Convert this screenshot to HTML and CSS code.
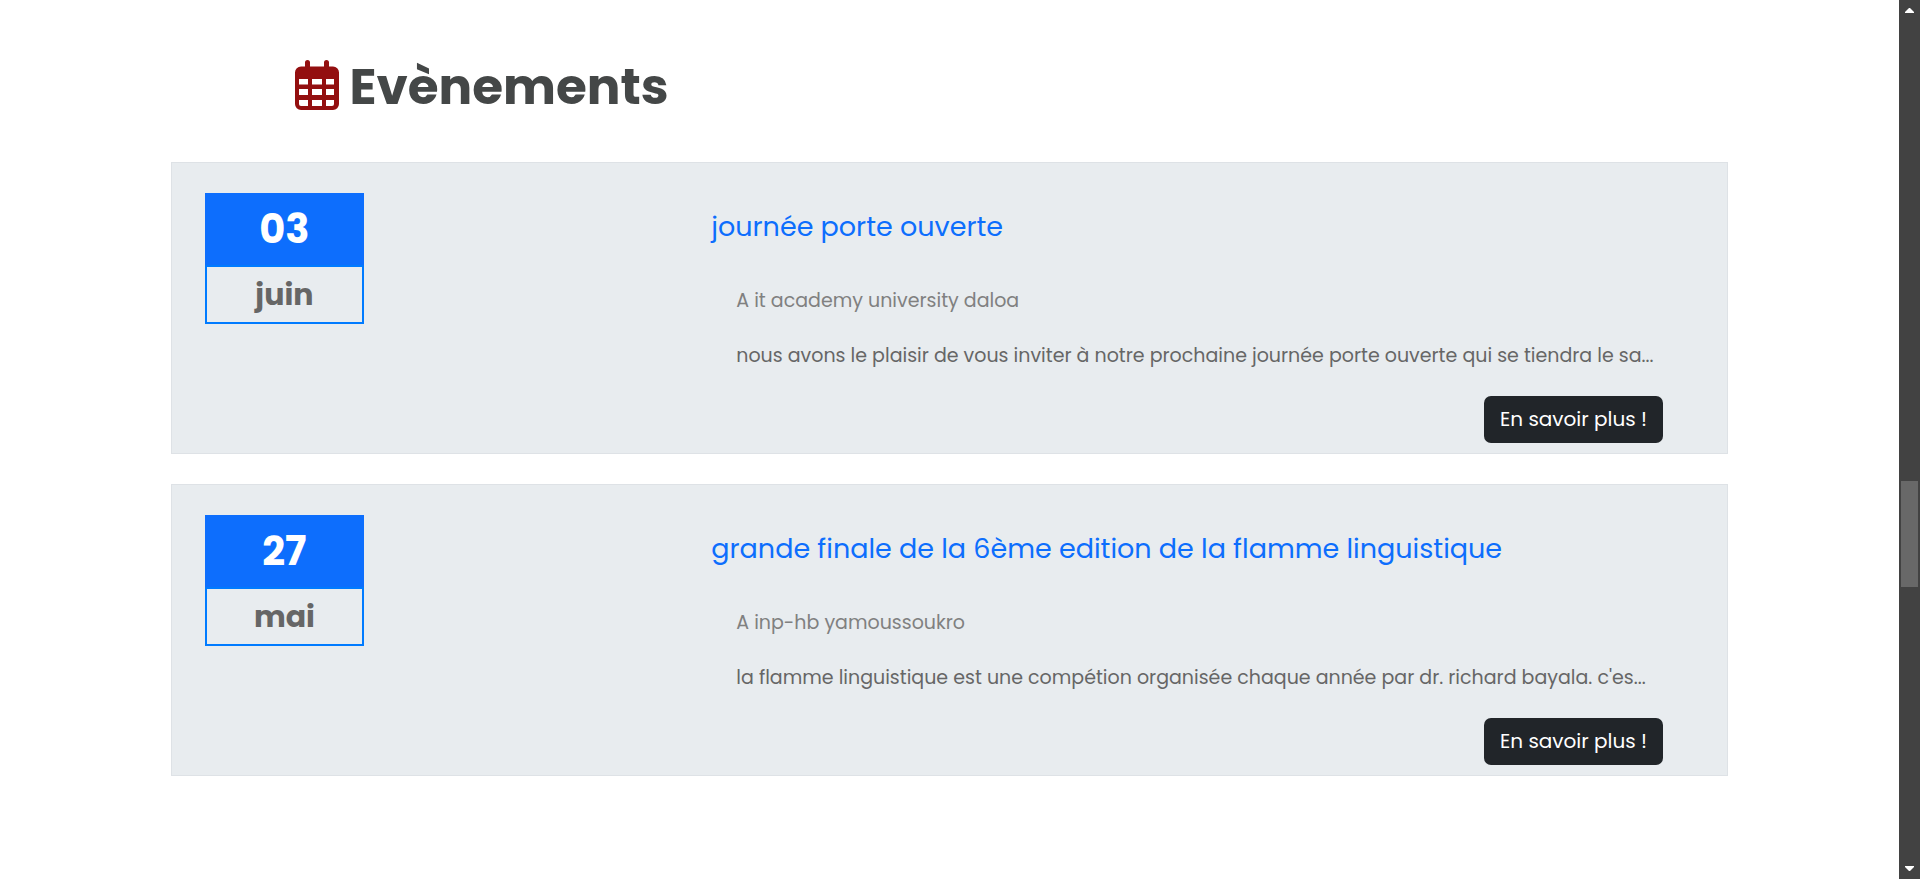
FILE: index.html
```html
<!DOCTYPE html>
<html lang="fr">
<head>
    <meta charset="utf-8" />
    <title>Evènements</title>
    <link rel="stylesheet" href="styles.css">
</head>
<body>
    <main>
        <section class="events">
            <h1 class="events-title">
                <svg class="calendar-icon" viewBox="0 0 44 50" aria-hidden="true">
                    <path fill="currentColor" fill-rule="evenodd" d="M10 2.500a2.500 2.500 0 0 1 5 0V6.500H29V2.500a2.500 2.500 0 0 1 5 0V6.500H38a6 6 0 0 1 6 6V44a6 6 0 0 1-6 6H6a6 6 0 0 1-6-6V12.500a6 6 0 0 1 6-6h4zM4 19v5.500h9V19zM17 19v5.500h10V19zM31 19v5.500h8V19zM4 29v6h9v-6zM17 29v6h10v-6zM31 29v6h8v-6zM4 40v4q0 2 2 2h7v-6zM17 40v6h10v-6zM31 40v6h6q2 0 2-2v-4z" />
                </svg>
                <span>Evènements</span>
            </h1>

            <article class="event">
                <div class="event-date">
                    <div class="day">03</div>
                    <div class="month">juin</div>
                </div>
                <div class="event-body">
                    <h2><a href="#">journée porte ouverte</a></h2>
                    <p class="place">A it academy university daloa</p>
                    <p class="text">nous avons le plaisir de vous inviter à notre prochaine journée porte ouverte qui se tiendra le sa...</p>
                    <a class="btn" href="#">En savoir plus !</a>
                </div>
            </article>

            <article class="event">
                <div class="event-date">
                    <div class="day">27</div>
                    <div class="month">mai</div>
                </div>
                <div class="event-body">
                    <h2><a href="#">grande finale de la 6ème edition de la flamme linguistique</a></h2>
                    <p class="place">A inp-hb yamoussoukro</p>
                    <p class="text">la flamme linguistique est une compétion organisée chaque année par dr. richard bayala. c'es...</p>
                    <a class="btn" href="#">En savoir plus !</a>
                </div>
            </article>
        </section>
    </main>

    <div class="scrollbar" aria-hidden="true">
        <svg class="arrow" viewBox="0 0 9 5"><path fill="#fff" d="M4 0h1l4 4v1H0V4z" /></svg>
        <div class="thumb"></div>
        <svg class="arrow" viewBox="0 0 9 5"><path fill="#fff" d="M0 0h9v1L5 5H4L0 1z" /></svg>
    </div>
</body>
</html>
```
FILE: styles.css
```css
* {
    box-sizing: border-box;
}

body {
    display: flex;
    min-height: 100vh;
    margin: 0;
    font-family: Poppins, Inter, sans-serif;
    font-size: 19px;
    line-height: 30px;
    color: #666;
    background-color: #fff;
}

h1, h2, p {
    margin: 0;
}

a {
    text-decoration: none;
}

main {
    flex: 1;
    min-width: 0;
}

.events {
    width: 82%;
    margin: 0 auto;
    padding-top: 52px;
}

.events-title {
    display: flex;
    align-items: center;
    gap: 10px;
    padding-left: 8%;
    margin-bottom: 40px;
    font-size: 50px;
    line-height: 70px;
    color: #444747;
}

.calendar-icon {
    width: 44px;
    height: 50px;
    margin-bottom: 4px;
    color: #930f10;
}

.event {
    display: grid;
    grid-template-columns: 1fr 2fr;
    padding-bottom: 10px;
    margin-bottom: 30px;
    border: 1px solid #dee2e6;
    background-color: #e8ecef;
}

.event-date {
    width: 159px;
    margin: 30px 0 0 33px;
    text-align: center;
    font-weight: bold;
}

.day {
    font-size: 40px;
    line-height: 72px;
    color: #fff;
    background-color: #0d6efd;
}

.month {
    font-size: 30px;
    line-height: 55px;
    border: 2px solid #007bff;
}

.event-body {
    display: flex;
    flex-direction: column;
    min-width: 0;
    padding: 44px 64px 0 21px;
}

.event-body h2 {
    margin-bottom: 39px;
    font-size: 27px;
    font-weight: normal;
    line-height: 40px;
}

.event-body h2 a {
    color: #0d6efd;
}

.place,
.text {
    padding-left: 25px;
    margin-bottom: 25px;
}

.place {
    color: #808080;
}

.btn {
    align-self: flex-end;
    padding: 8px 16px;
    border-radius: 7px;
    font-size: 20px;
    line-height: 31px;
    color: #fff;
    background-color: #212529;
}

.scrollbar {
    display: grid;
    grid-template-rows: 21px 460fr 106fr 271fr 21px;
    justify-items: center;
    align-items: center;
    width: 21px;
    background-color: #424242;
}

.thumb {
    grid-row: 3;
    width: 17px;
    height: 100%;
    background-color: #686868;
}

.arrow {
    width: 9px;
    height: 5px;
}

.arrow:last-child {
    grid-row: 5;
}
```
